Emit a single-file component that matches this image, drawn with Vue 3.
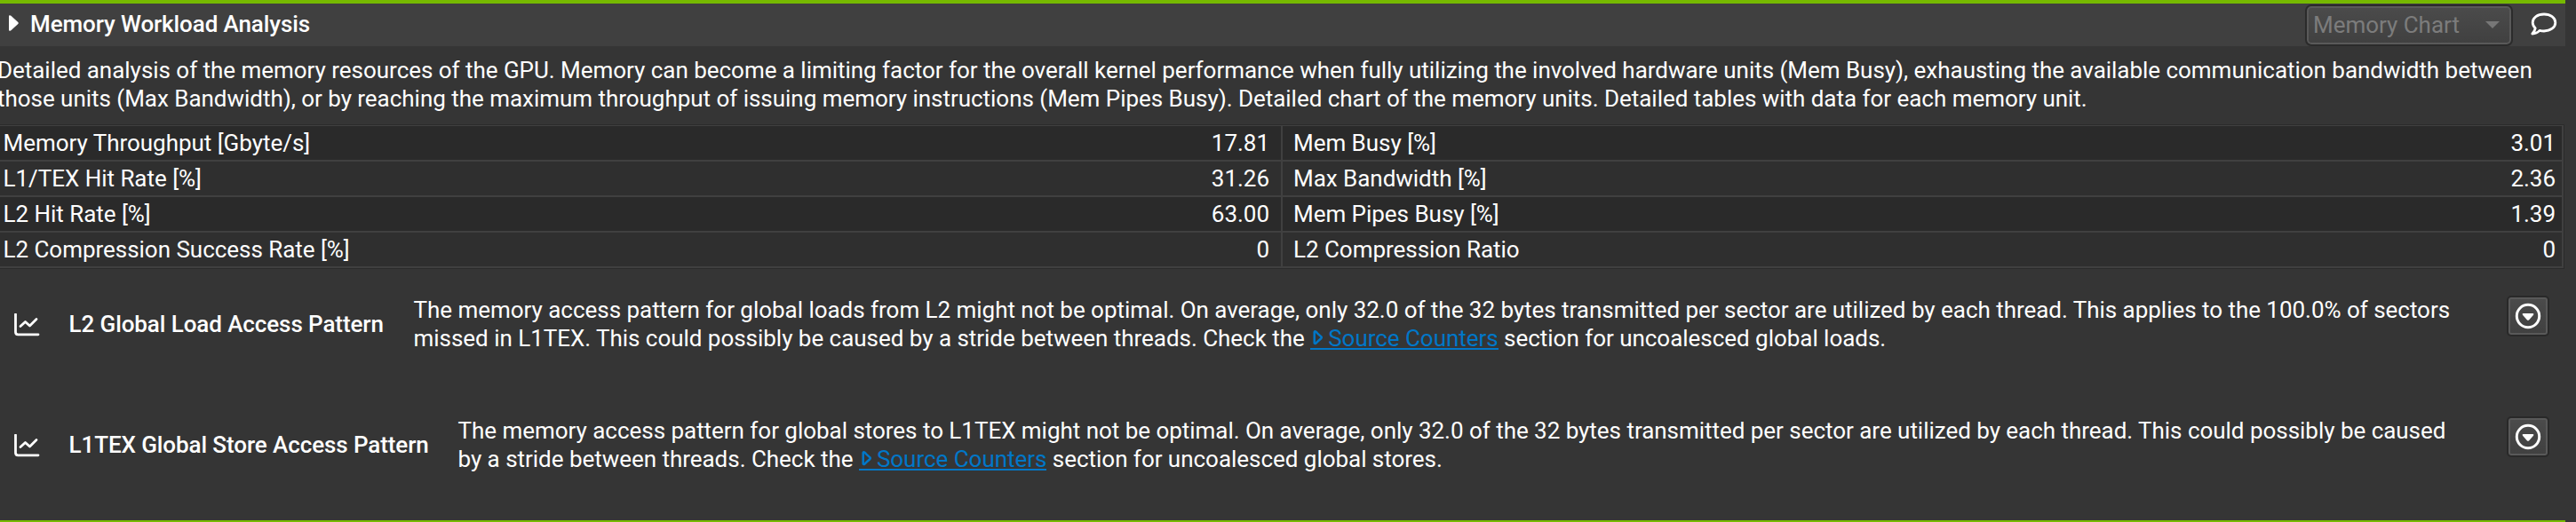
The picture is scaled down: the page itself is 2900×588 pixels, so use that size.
<script setup>
const rows = [
  ['Memory Throughput [Gbyte/s]', '17.81', 'Mem Busy [%]', '3.01'],
  ['L1/TEX Hit Rate [%]', '31.26', 'Max Bandwidth [%]', '2.36'],
  ['L2 Hit Rate [%]', '63.00', 'Mem Pipes Busy [%]', '1.39'],
  ['L2 Compression Success Rate [%]', '0', 'L2 Compression Ratio', '0'],
]
const rules = [
  {
    title: 'L2 Global Load Access Pattern',
    kind: 'load',
    first: 'The memory access pattern for global loads from L2 might not be optimal. On average, only 32.0 of the 32 bytes transmitted per sector are utilized by each thread. This applies to the 100.0% of sectors',
    before: 'missed in L1TEX. This could possibly be caused by a stride between threads. Check the ',
    after: ' section for uncoalesced global loads.',
  },
  {
    title: 'L1TEX Global Store Access Pattern',
    kind: 'store',
    first: 'The memory access pattern for global stores to L1TEX might not be optimal. On average, only 32.0 of the 32 bytes transmitted per sector are utilized by each thread. This could possibly be caused',
    before: 'by a stride between threads. Check the ',
    after: ' section for uncoalesced global stores.',
  },
]
</script>

<template>
  <main class="page">
    <section class="panel">
      <header class="head">
        <svg class="expander" width="12" height="18" viewBox="0 0 12 18"><path d="M1 1.500Q1 -0.300 3 0.600Q4 1.100 5 2.200L11.300 8Q12.200 9 11.300 10L5 15.800Q4 16.900 3 17.400Q1 18.300 1 16.500Z" fill="#fff" /></svg>
        <h1 class="title">Memory Workload Analysis</h1>
        <div class="select">
          <span>Memory Chart</span>
          <svg width="16" height="8" viewBox="0 0 16 8"><path d="M0 0H16L8 8Z" fill="#777" /></svg>
        </div>
        <svg class="bubble" width="32" height="28" viewBox="0 0 32 28">
          <path d="M16 3C8.800 3 3.200 6.900 3.200 12.300C3.200 14.800 4.400 17 6.200 18.700C5.800 21.300 4.600 23.200 2.800 25C6 25 8.800 23.800 11 21.400C12.600 21.800 14.300 22 16 22C23.200 22 28.800 17.800 28.800 12.500C28.800 7 23.200 3 16 3Z" fill="none" stroke="#fff" stroke-width="2.800" stroke-linejoin="round" />
        </svg>
      </header>
      <div class="desc">
        <div>Detailed analysis of the memory resources of the GPU. Memory can become a limiting factor for the overall kernel performance when fully utilizing the involved hardware units (Mem Busy), exhausting the available communication bandwidth between</div>
        <div>those units (Max Bandwidth), or by reaching the maximum throughput of issuing memory instructions (Mem Pipes Busy). Detailed chart of the memory units. Detailed tables with data for each memory unit.</div>
      </div>
      <div class="table">
        <div v-for="r in rows" :key="r[0]" class="row">
          <div class="cell left"><span>{{ r[0] }}</span><span>{{ r[1] }}</span></div>
          <div class="cell right"><span>{{ r[2] }}</span><span>{{ r[3] }}</span></div>
        </div>
      </div>
      <article v-for="r in rules" :key="r.title" class="rule">
        <svg class="chart" width="30" height="26" viewBox="0 0 30 26" fill="none" stroke="#fff">
          <path d="M2.500 1V21Q2.500 23.800 5.300 23.800H28" stroke-width="2.800" stroke-linecap="round" />
          <path d="M8 14.500L13.500 9.500L18.500 14L26 6.500" stroke-width="2.800" stroke-linecap="round" stroke-linejoin="round" />
        </svg>
        <h2 class="name" :class="r.kind">{{ r.title }}</h2>
        <div class="text">
          <div>{{ r.first }}</div>
          <div>{{ r.before }}<a class="link"><svg width="20" height="22" viewBox="0 0 20 22"><path d="M4.700 4V16.500Q5 17.600 6.500 16.600Q7.300 16 8 15L12.500 11Q13.200 10.200 12.500 9.400L8 5.400Q7.300 4.400 6.500 3.800Q5 2.800 4.700 4Z" fill="none" stroke="#0077c8" stroke-width="2.500" stroke-linejoin="round" /></svg>Source Counters</a>{{ r.after }}</div>
        </div>
        <button class="btn">
          <svg width="30" height="30" viewBox="0 0 30 30"><circle cx="15" cy="15" r="12.700" fill="none" stroke="#fff" stroke-width="3" /><path d="M9.500 12H20.500Q22 12.200 21 13.700L16.200 19.200Q15 20.400 13.800 19.200L9 13.700Q8 12.200 9.500 12Z" fill="#fff" /></svg>
        </button>
      </article>
    </section>
  </main>
</template>

<style>
body { background: #353535; }
</style>

<style scoped>
.page {
  width: 2900px;
  height: 588px;
  overflow: hidden;
  background: #353535;
  color: #fff;
  font-family: Roboto, sans-serif;
  font-size: 26px;
  line-height: 32px;
  white-space: pre;
}
.panel {
  box-sizing: border-box;
  width: 2888px;
  height: 588px;
  border-top: 4px solid #76b900;
  border-bottom: 2px solid #76b900;
}
.head {
  box-sizing: border-box;
  height: 48px;
  display: flex;
  align-items: flex-start;
  padding: 1px 8px 0 9px;
  background: #404040;
}
.expander { margin-top: 12px; }
.title {
  margin: 6px auto 0 13px;
  font-size: 26px;
  font-weight: 500;
  letter-spacing: -0.1px;
}
.select {
  box-sizing: border-box;
  width: 234px;
  height: 47px;
  margin-right: 19px;
  padding: 5px 13px 0 7px;
  display: flex;
  justify-content: space-between;
  border: 2px solid #2b2b2b;
  border-radius: 7px;
  background: linear-gradient(#4b4b4b, #404040);
  box-shadow: inset 0 0 0 2px #595959;
  color: #7c7c7c;
  letter-spacing: -0.03px;
}
.select svg { margin-top: 12px; }
.bubble { margin-top: 8px; }
.desc { margin: 11px 0 0 -3px; height: 77px; letter-spacing: -0.031px; }
.table {
  width: 2887px;
  box-sizing: border-box;
  border: 1px solid #2b2b2b;
  border-left: 0;
  padding: 1px 2px 0 0;
  background: #404040;
}
.row {
  display: grid;
  grid-template-columns: 1442px 1fr;
  column-gap: 2px;
  height: 38px;
  margin-bottom: 2px;
}
.cell {
  display: flex;
  justify-content: space-between;
  padding: 3px 13px 0 3.500px;
  background: #2f2f2f;
  letter-spacing: -0.03px;
}
.cell.right { padding: 3px 7px 0 12px; }
.row:nth-child(odd) .cell { background: #2a2a2a; }
.rule {
  height: 136px;
  box-sizing: border-box;
  padding: 30px 18px 0 15px;
  display: flex;
  align-items: flex-start;
}
.chart { margin-top: 20px; }
.name {
  margin: 16px 0 0 32.500px;
  width: 388px;
  flex: none;
  font-size: 26px;
  font-weight: 500;
  letter-spacing: -0.09px;
}
.name.store { width: 438px; }
.text { flex: 1; letter-spacing: -0.031px; }
.link {
  color: #0077c8;
  background: linear-gradient(#0077c8, #0077c8) no-repeat 0 26px / 100% 2px;
}
.link svg { vertical-align: -2px; }
.btn {
  box-sizing: border-box;
  width: 48px;
  height: 46px;
  padding: 5px 7px;
  border: 2px solid #292929;
  border-radius: 5px;
  background: linear-gradient(#4b4b4b, #404040);
  box-shadow: inset 0 0 0 2px #595959;
}
.btn svg { display: block; }
</style>
